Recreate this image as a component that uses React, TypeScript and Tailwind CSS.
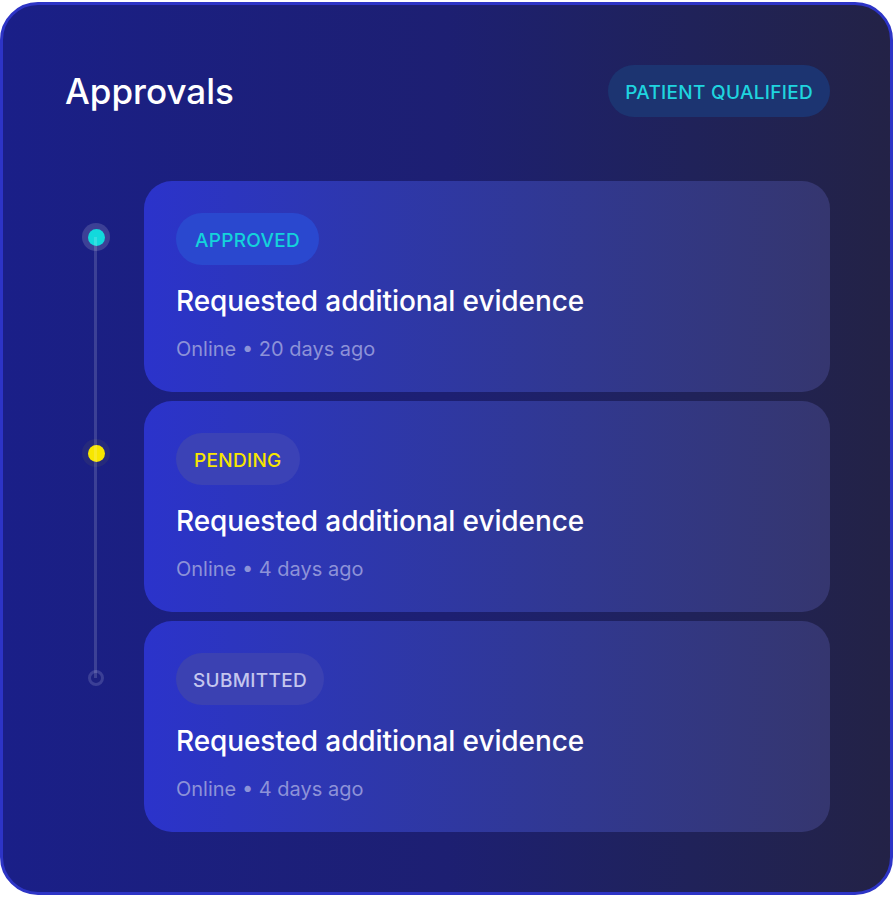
import { Fragment } from "react";

type Status = "approved" | "pending" | "submitted";

interface Step {
  id: number;
  status: Status;
  title: string;
  meta: string;
}

const steps: Step[] = [
  { id: 1, status: "approved", title: "Requested additional evidence", meta: "Online • 20 days ago" },
  { id: 2, status: "pending", title: "Requested additional evidence", meta: "Online • 4 days ago" },
  { id: 3, status: "submitted", title: "Requested additional evidence", meta: "Online • 4 days ago" },
];

const badgeStyles: Record<Status, string> = {
  approved: "bg-[#2a48cf] text-[#14d3db] px-[19px]",
  pending: "bg-[#3b42b6] text-[#f7e600] px-[18px]",
  submitted: "bg-[#3b41b2] text-[#c4c6ee] px-[17px]",
};

// dot offset from the top of its card
const dotOffset: Record<Status, string> = {
  approved: "mt-[42px]",
  pending: "mt-[38px]",
  submitted: "mt-[43px]",
};

function Dot({ status }: { status: Status }) {
  if (status === "approved") {
    return (
      <div className="flex h-[28px] w-[28px] items-center justify-center rounded-full bg-white/15">
        <div className="h-[17px] w-[17px] rounded-full bg-[#12d9dc]" />
      </div>
    );
  }
  if (status === "pending") {
    return (
      <div className="flex h-[28px] w-[28px] items-center justify-center rounded-full bg-[#262a7c]">
        <div className="h-[17px] w-[17px] rounded-full bg-[#f7e600]" />
      </div>
    );
  }
  return (
    <div className="flex h-[28px] w-[28px] items-center justify-center">
      <div className="h-[16px] w-[16px] rounded-full border-[3px] border-[#3b3f96] bg-[#1c2080]" />
    </div>
  );
}

export default function App() {
  return (
    <div className="pt-[2px]" style={{ fontFamily: "Inter, 'Noto Sans', sans-serif" }}>
      <div className="h-[893px] w-[893px] rounded-[38px] border-[3px] border-[#2d34c6] bg-gradient-to-r from-[#1a1f88] via-[#1d1f72] to-[#232246] pl-[62px] pr-[60px] pt-[60px]">
        {/* Header */}
        <div className="flex h-[52px] items-center justify-between">
          <h1 className="text-[35px] font-medium tracking-[0px] text-white">Approvals</h1>
          <span className="flex h-[52px] items-center rounded-full bg-[#1c3471] px-[17px] pt-[4px] text-[19px] font-medium tracking-[0.3px] text-[#1fd4df]">
            PATIENT QUALIFIED
          </span>
        </div>

        {/* Timeline */}
        <div className="relative mt-[64px] flex flex-col gap-[9px]">
          <div className="absolute left-[29px] top-[56px] h-[441px] w-[3px] bg-white/15" />
          {steps.map((step) => (
            <Fragment key={step.id}>
              <div className="flex">
                <div className="w-[79px] shrink-0">
                  <div className={`ml-[17px] ${dotOffset[step.status]}`}>
                    <Dot status={step.status} />
                  </div>
                </div>
                <div className="flex h-[211px] flex-1 flex-col items-start rounded-[28px] bg-gradient-to-r from-[#2b33cb] to-[#35366f] px-[32px] pt-[32px]">
                  <span
                    className={`flex h-[52px] items-center rounded-full pt-[4px] text-[19px] font-medium tracking-[0.3px] ${badgeStyles[step.status]}`}
                  >
                    {step.status.toUpperCase()}
                  </span>
                  <p className="mt-[19px] text-[28px] font-medium leading-[34px] tracking-[-0.1px] text-white">
                    {step.title}
                  </p>
                  <p className="mt-[18px] text-[20px] leading-[26px] text-[#8d92d8]">{step.meta}</p>
                </div>
              </div>
            </Fragment>
          ))}
        </div>
      </div>
    </div>
  );
}
